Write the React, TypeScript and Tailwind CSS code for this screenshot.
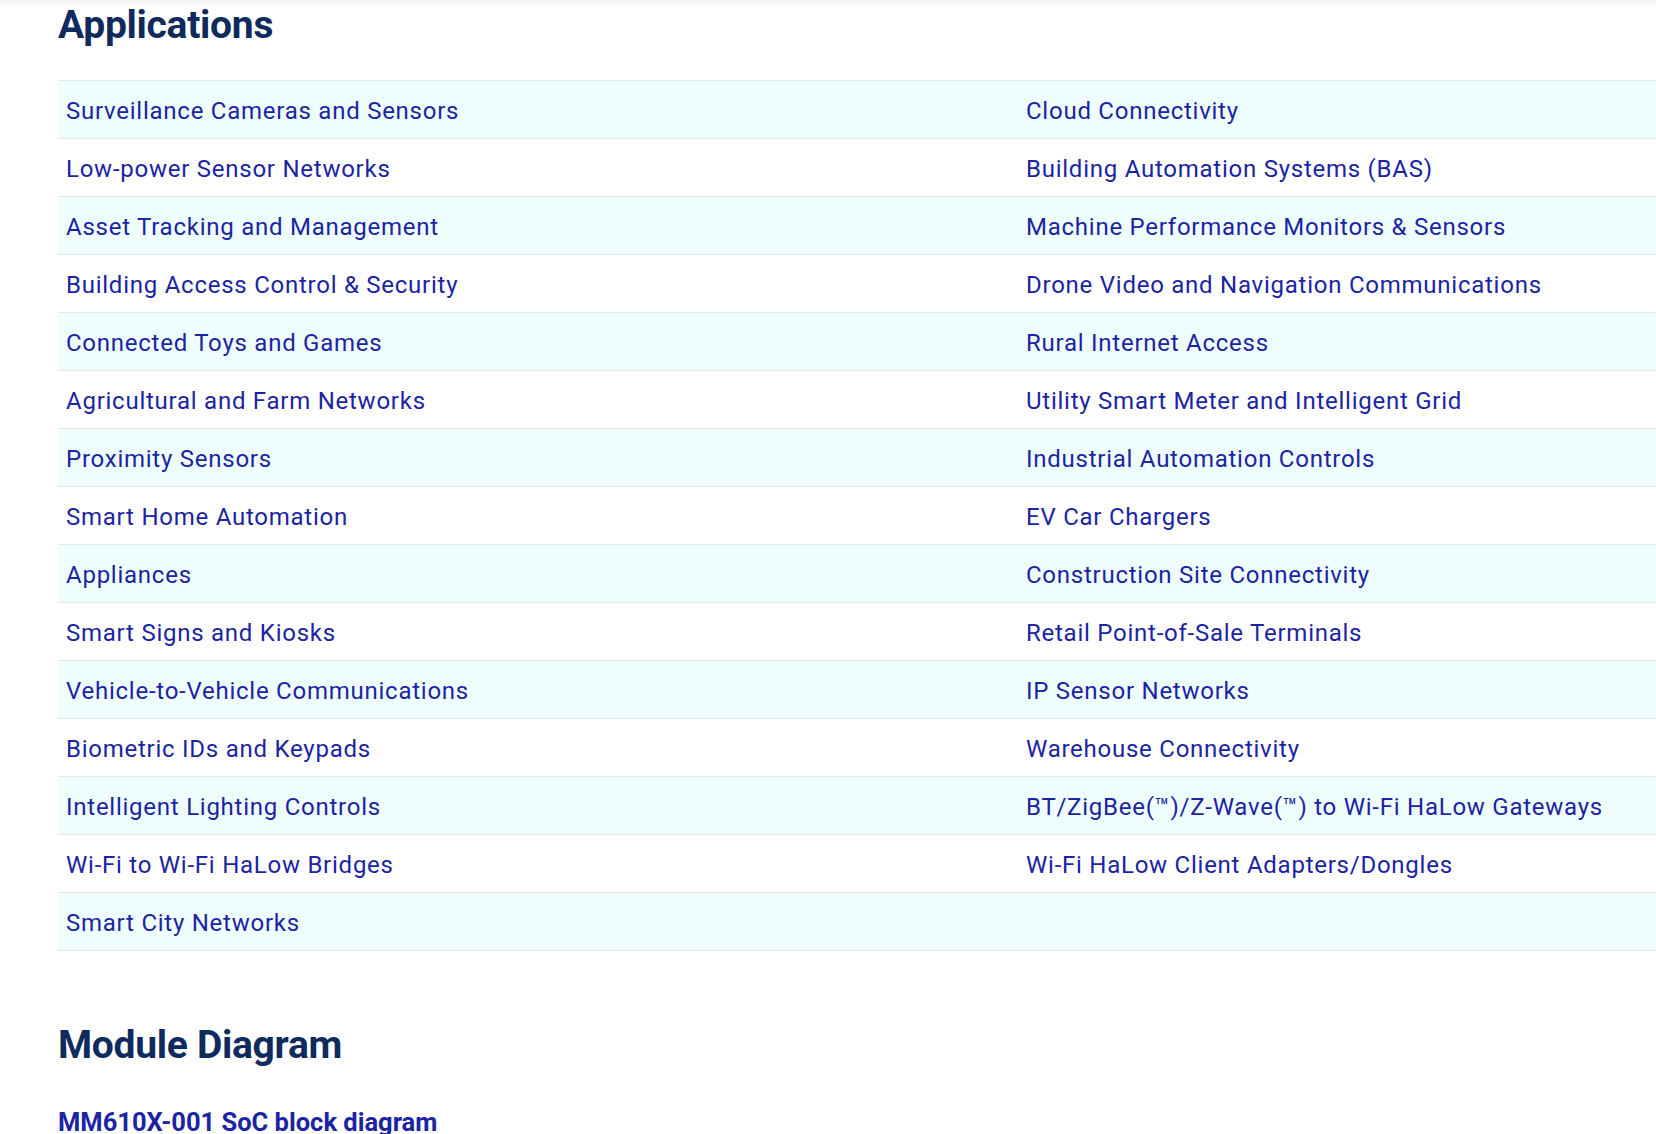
const rows: [string, string][] = [
  ["Surveillance Cameras and Sensors", "Cloud Connectivity"],
  ["Low-power Sensor Networks", "Building Automation Systems (BAS)"],
  ["Asset Tracking and Management", "Machine Performance Monitors & Sensors"],
  ["Building Access Control & Security", "Drone Video and Navigation Communications"],
  ["Connected Toys and Games", "Rural Internet Access"],
  ["Agricultural and Farm Networks", "Utility Smart Meter and Intelligent Grid"],
  ["Proximity Sensors", "Industrial Automation Controls"],
  ["Smart Home Automation", "EV Car Chargers"],
  ["Appliances", "Construction Site Connectivity"],
  ["Smart Signs and Kiosks", "Retail Point-of-Sale Terminals"],
  ["Vehicle-to-Vehicle Communications", "IP Sensor Networks"],
  ["Biometric IDs and Keypads", "Warehouse Connectivity"],
  ["Intelligent Lighting Controls", "BT/ZigBee(™)/Z-Wave(™) to Wi-Fi HaLow Gateways"],
  ["Wi-Fi to Wi-Fi HaLow Bridges", "Wi-Fi HaLow Client Adapters/Dongles"],
  ["Smart City Networks", ""],
];

export default function App() {
  return (
    <div className="w-[1656px] h-[1134px] overflow-hidden bg-white relative" style={{ fontFamily: "Roboto, sans-serif" }}>
      <div className="absolute top-0 left-0 right-0 h-[8px] bg-gradient-to-b from-[#f0f0f0] to-white" />
      <div className="pl-[58px]">
        <h2 className="text-[39px] font-bold text-[#0f2a5c] leading-[48px] pt-[1px] tracking-[-0.3px]">Applications</h2>
        <div className="mt-[31px] w-[1700px] border-t border-[#dfeaec]">
          {rows.map((r, i) => (
            <div key={i} className={`flex h-[58px] items-center pt-[2px] border-b border-[#dfeaec] ${i % 2 === 0 ? "bg-[#effdfd]" : "bg-white"}`}>
              <div className="w-[960px] pl-[8px] text-[24px] tracking-[0.75px] text-[#1b24a3]">{r[0]}</div>
              <div className="pl-[8px] text-[24px] tracking-[0.75px] text-[#1b24a3]">{r[1]}</div>
            </div>
          ))}
        </div>
        <h2 className="mt-[70px] text-[39px] font-bold text-[#0f2a5c] leading-[48px] tracking-[-0.3px]">Module Diagram</h2>
        <div className="mt-[38px] text-[25.5px] font-bold text-[#1b24a3] leading-[30px]">MM610X-001 SoC block diagram</div>
      </div>
    </div>
  );
}
